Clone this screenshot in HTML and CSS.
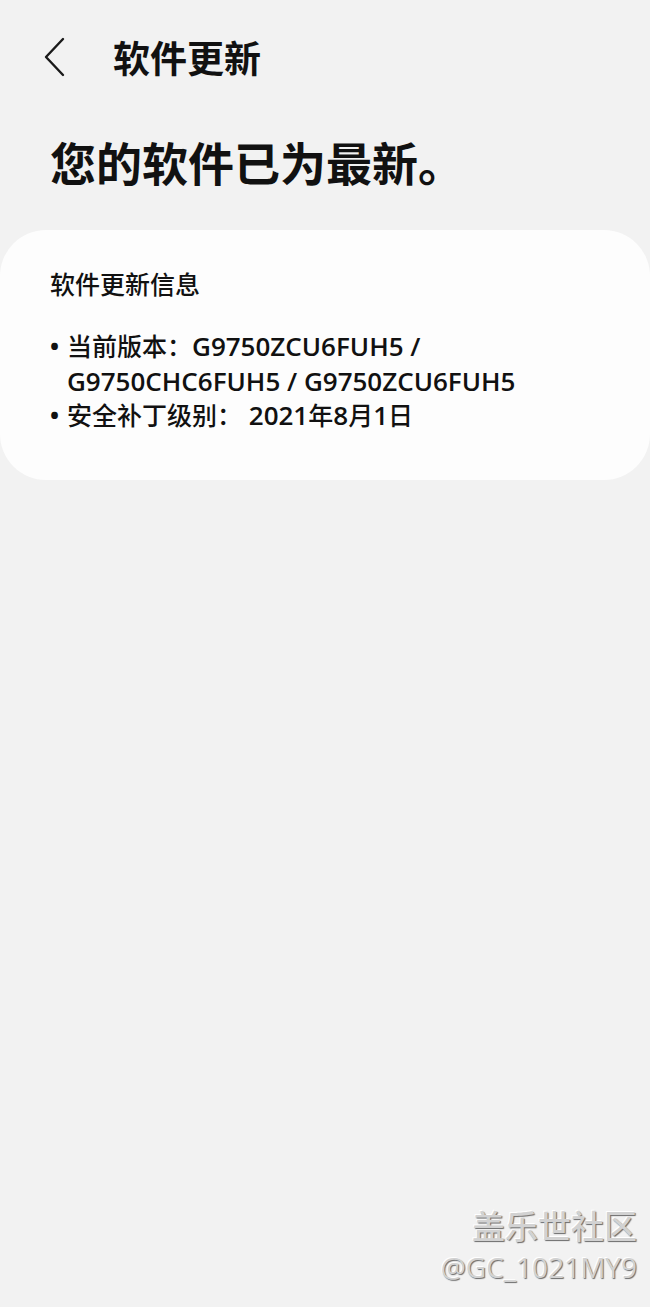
FILE: index.html
```html
<!DOCTYPE html>
<html lang="zh-CN">
<head>
<meta charset="utf-8">
<title>软件更新</title>
<link rel="stylesheet" href="styles.css">
</head>
<body>
<div class="page">
  <header class="topbar">
    <svg class="back" width="24" height="40" viewBox="0 0 24 40" aria-hidden="true">
      <path d="M20 2 L3 20 L20 38" fill="none" stroke="#1a1a1a" stroke-width="2.4" stroke-linecap="round" stroke-linejoin="round"/>
    </svg>
    <h1 class="title">软件更新</h1>
  </header>
  <h2 class="status">您的软件已为最新。</h2>
  <section class="card">
    <h3 class="card-title">软件更新信息</h3>
    <ul class="info">
      <li><span>当前版本：<span class="code">G9750ZCU6FUH5 /</span><br><span class="code">G9750CHC6FUH5 / G9750ZCU6FUH5</span></span></li>
      <li><span>安全补丁级别：<span class="code"> 2021</span>年<span class="code">8</span>月<span class="code">1</span>日</span></li>
    </ul>
  </section>
  <div class="watermark">
    <div class="wm-cn">盖乐世社区</div>
    <div class="wm-id">@GC_1021MY9</div>
  </div>
</div>
</body>
</html>
```

FILE: styles.css
```css
html, body {
  margin: 0;
  padding: 0;
  background: #f2f2f2;
}

.page {
  position: relative;
  width: 650px;
  height: 1307px;
  font-family: "Noto Sans CJK SC", sans-serif;
  color: #111;
  overflow: hidden;
}

.topbar {
  display: flex;
  align-items: center;
  padding: 37px 0 0 43px;
  height: 40px;
}

.back {
  display: block;
  flex: none;
}

.title {
  margin: 0 0 0 46px;
  font-size: 37px;
  font-weight: 700;
  line-height: 40px;
}

.status {
  margin: 56px 0 0 50px;
  font-size: 46px;
  font-weight: 700;
  line-height: 56px;
}

.card {
  margin-top: 41px;
  background: #fdfdfd;
  border-radius: 46px;
  height: 250px;
  box-sizing: border-box;
  padding: 36px 40px 0 50px;
}

.card-title {
  margin: 0;
  font-size: 25px;
  font-weight: 500;
  line-height: 34px;
}

.info {
  list-style: none;
  margin: 29px 0 0 0;
  padding: 0;
  font-size: 25px;
  font-weight: 500;
  line-height: 33.5px;
}

.info li {
  display: flex;
}

.info li::before {
  content: "•";
  flex: none;
  width: 17px;
  font-family: "Open Sans", sans-serif;
  font-weight: 700;
  font-size: 24px;
}

.code {
  font-family: "Open Sans", sans-serif;
  font-size: 26px;
  font-weight: 600;
  white-space: pre;
}

.watermark {
  position: absolute;
  right: 13px;
  bottom: 20px;
  text-align: right;
  color: #d2d2d2;
  text-shadow: 1px 1px 1px #6a6a6a, -1px -1px 0 #ffffff;
}

.wm-cn {
  font-size: 33px;
  font-weight: 500;
  line-height: 44px;
}

.wm-id {
  font-family: "Open Sans", sans-serif;
  font-size: 28px;
  font-weight: 400;
  line-height: 40px;
}
```
